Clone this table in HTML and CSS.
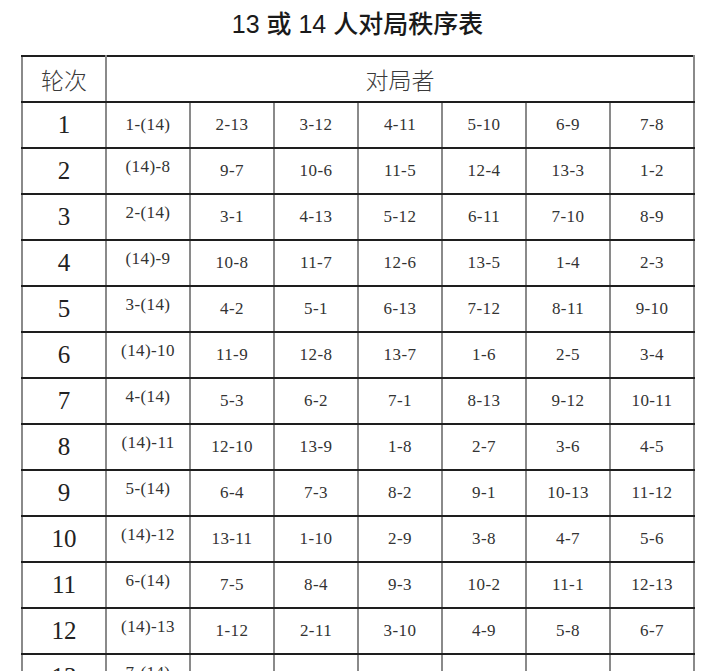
FILE: index.html
```html
<!DOCTYPE html>
<html lang="zh">
<head>
<meta charset="utf-8">
<link rel="stylesheet" href="styles.css">
</head>
<body>
<div class="page">
  <h1 class="title">13 或 14 人对局秩序表</h1>
  <table class="sched">
    <colgroup>
      <col class="c"><col class="c"><col class="c"><col class="c"><col class="c"><col class="c"><col class="c"><col class="c">
    </colgroup>
    <thead>
      <tr><th class="hd">轮次</th><th class="hd" colspan="7">对局者</th></tr>
    </thead>
    <tbody>
      <tr><td class="rn">1</td><td>1-(14)</td><td>2-13</td><td>3-12</td><td>4-11</td><td>5-10</td><td>6-9</td><td>7-8</td></tr>
      <tr><td class="rn">2</td><td class="hi">(14)-8</td><td>9-7</td><td>10-6</td><td>11-5</td><td>12-4</td><td>13-3</td><td>1-2</td></tr>
      <tr><td class="rn">3</td><td class="hi">2-(14)</td><td>3-1</td><td>4-13</td><td>5-12</td><td>6-11</td><td>7-10</td><td>8-9</td></tr>
      <tr><td class="rn">4</td><td class="hi">(14)-9</td><td>10-8</td><td>11-7</td><td>12-6</td><td>13-5</td><td>1-4</td><td>2-3</td></tr>
      <tr><td class="rn">5</td><td class="hi">3-(14)</td><td>4-2</td><td>5-1</td><td>6-13</td><td>7-12</td><td>8-11</td><td>9-10</td></tr>
      <tr><td class="rn">6</td><td class="hi">(14)-10</td><td>11-9</td><td>12-8</td><td>13-7</td><td>1-6</td><td>2-5</td><td>3-4</td></tr>
      <tr><td class="rn">7</td><td class="hi">4-(14)</td><td>5-3</td><td>6-2</td><td>7-1</td><td>8-13</td><td>9-12</td><td>10-11</td></tr>
      <tr><td class="rn">8</td><td class="hi">(14)-11</td><td>12-10</td><td>13-9</td><td>1-8</td><td>2-7</td><td>3-6</td><td>4-5</td></tr>
      <tr><td class="rn">9</td><td class="hi">5-(14)</td><td>6-4</td><td>7-3</td><td>8-2</td><td>9-1</td><td>10-13</td><td>11-12</td></tr>
      <tr><td class="rn">10</td><td class="hi">(14)-12</td><td>13-11</td><td>1-10</td><td>2-9</td><td>3-8</td><td>4-7</td><td>5-6</td></tr>
      <tr><td class="rn">11</td><td class="hi">6-(14)</td><td>7-5</td><td>8-4</td><td>9-3</td><td>10-2</td><td>11-1</td><td>12-13</td></tr>
      <tr><td class="rn">12</td><td class="hi">(14)-13</td><td>1-12</td><td>2-11</td><td>3-10</td><td>4-9</td><td>5-8</td><td>6-7</td></tr>
      <tr><td class="rn">13</td><td class="hi">7-(14)</td><td>8-6</td><td>9-5</td><td>10-4</td><td>11-3</td><td>12-2</td><td>13-1</td></tr>
    </tbody>
  </table>
</div>
</body>
</html>
```
FILE: styles.css
```css
html, body {
  margin: 0;
  padding: 0;
  background: #ffffff;
}
.page {
  padding-left: 21px;
}
.title {
  margin: 0;
  height: 55px;
  padding-top: 10px;
  box-sizing: border-box;
  width: 673px;
  text-align: center;
  font-family: "Liberation Sans", "Noto Sans CJK SC", sans-serif;
  font-size: 25px;
  line-height: 28px;
  font-weight: 500;
  color: #1a1a1a;
}
.sched {
  border-collapse: collapse;
  table-layout: fixed;
  width: 674px;
}
.c {
  width: 84px;
}
.sched th,
.sched td {
  height: 44px;
  padding: 0;
  text-align: center;
  vertical-align: middle;
  border-top: 2px solid #1e1e1e;
  border-bottom: 2px solid #1e1e1e;
  border-left: 2px solid #8a8a8a;
  border-right: 2px solid #8a8a8a;
  font-family: "Liberation Serif", serif;
  font-size: 17px;
  letter-spacing: 0.4px;
  color: #333333;
}
.sched th.hd {
  font-family: "Noto Sans CJK SC", sans-serif;
  font-weight: 300;
  font-size: 23px;
  letter-spacing: 0;
  color: #3a3a3a;
}
.sched td.rn {
  font-size: 25px;
  letter-spacing: 0;
  color: #222222;
}
.sched td.hi {
  height: 36px;
  padding-bottom: 8px;
}
```
